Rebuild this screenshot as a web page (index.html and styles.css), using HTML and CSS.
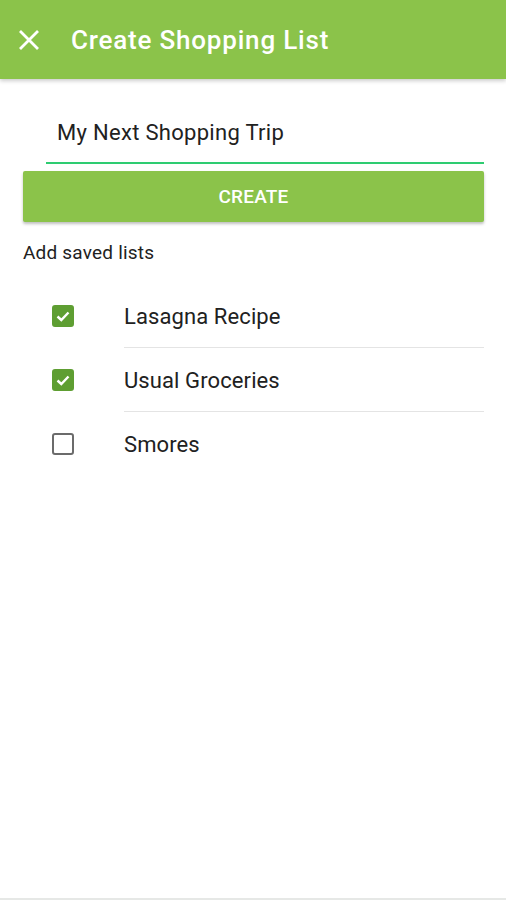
FILE: index.html
```html
<!DOCTYPE html>
<html>
<head>
<meta charset="utf-8">
<link rel="stylesheet" href="styles.css">
</head>
<body>
<div class="app">
  <header class="toolbar">
    <svg class="close" width="24" height="24" viewBox="0 0 24 24"><path d="M3 3L21 21M21 3L3 21" stroke="#fff" stroke-width="2.8" fill="none"/></svg>
    <h1 class="title">Create Shopping List</h1>
  </header>
  <main class="content">
    <div class="field">
      <div class="field-text">My Next Shopping Trip</div>
    </div>
    <button class="create">CREATE</button>
    <div class="section-label">Add saved lists</div>
    <ul class="lists">
      <li class="item">
        <span class="box checked"><svg width="22" height="22" viewBox="0 0 22 22"><path d="M5.5 11.5L9.3 15L16.5 7.5" stroke="#fff" stroke-width="2.4" fill="none"/></svg></span>
        <span class="label">Lasagna Recipe</span>
      </li>
      <li class="item">
        <span class="box checked"><svg width="22" height="22" viewBox="0 0 22 22"><path d="M5.5 11.5L9.3 15L16.5 7.5" stroke="#fff" stroke-width="2.4" fill="none"/></svg></span>
        <span class="label">Usual Groceries</span>
      </li>
      <li class="item">
        <span class="box"></span>
        <span class="label">Smores</span>
      </li>
    </ul>
  </main>
  <div class="bottom-line"></div>
</div>
</body>
</html>
```
FILE: styles.css
```css
* { box-sizing: border-box; }
html, body { margin: 0; padding: 0; }
body {
  font-family: Roboto, "Noto Sans", sans-serif;
  background: #fff;
  width: 506px;
  height: 900px;
  overflow: hidden;
}
.app {
  height: 900px;
  display: flex;
  flex-direction: column;
}
.toolbar {
  height: 79px;
  background: #8bc34a;
  display: flex;
  align-items: center;
  padding-left: 17px;
  box-shadow: 0 2px 4px rgba(0,0,0,0.2);
  position: relative;
  z-index: 1;
}
.close { display: block; }
.title {
  margin: 0 0 0 30px;
  color: #fff;
  font-size: 26px;
  font-weight: 500;
  letter-spacing: 0.8px;
}
.content {
  flex: 1;
  padding: 0 22px 0 23px;
}
.field {
  margin: 0 0 7px 23px;
  height: 85px;
  border-bottom: 2px solid #2ecc71;
  display: flex;
  align-items: flex-end;
  padding: 0 0 17px 11px;
}
.field-text {
  font-size: 22px;
  letter-spacing: 0.3px;
  color: #212121;
}
.create {
  display: block;
  width: 461px;
  height: 51px;
  border: none;
  border-radius: 2px;
  background: #8bc34a;
  color: #fff;
  font-family: Roboto, sans-serif;
  font-size: 19px;
  font-weight: 500;
  letter-spacing: 0.2px;
  box-shadow: 0 2px 3px rgba(0,0,0,0.25);
  padding: 0;
}
.section-label {
  margin-top: 20px;
  font-size: 19px;
  letter-spacing: 0.2px;
  color: #212121;
  line-height: 22px;
}
.lists {
  list-style: none;
  margin: 20px 0 0 0;
  padding: 0;
}
.item {
  display: flex;
  align-items: center;
  height: 64px;
}
.box {
  width: 22px;
  height: 22px;
  margin-left: 29px;
  border: 2px solid #6b6b6b;
  border-radius: 3px;
  flex: none;
  position: relative;
}
.box.checked {
  background: #5e9e32;
  border-color: #5e9e32;
}
.box svg { position: absolute; left: -2px; top: -2px; }
.label {
  margin-left: 50px;
  flex: 1;
  align-self: stretch;
  display: flex;
  align-items: center;
  font-size: 22px;
  letter-spacing: 0.1px;
  color: #212121;
  border-bottom: 1px solid #e4e4e4;
  padding-top: 1px;
}
.item:last-child .label { border-bottom: none; }
.bottom-line {
  height: 2px;
  background: #e6e8e6;
}
```
